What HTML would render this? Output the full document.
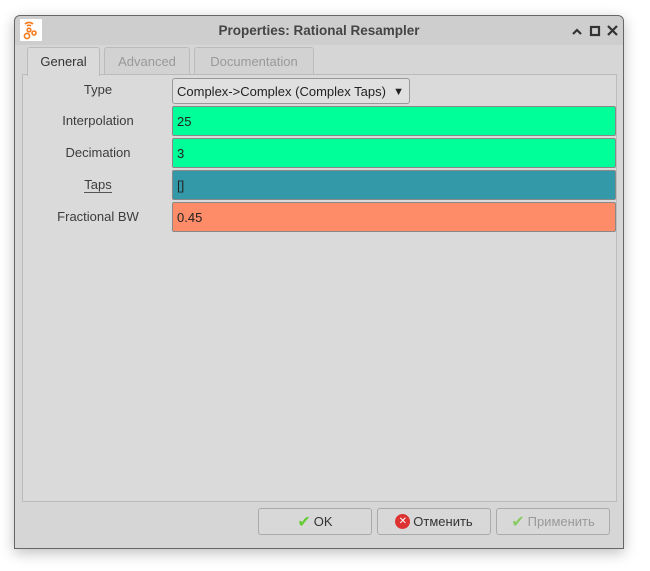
<!DOCTYPE html>
<html><head><style>
body{margin:0;width:650px;height:571px;background:#fff;font-family:"Liberation Sans","DejaVu Sans",sans-serif;font-size:13px;color:#333;position:relative;overflow:hidden}
.win{position:absolute;left:14px;top:15px;width:608px;height:532px;background:#d6d6d6;border:1px solid #666;border-radius:6px 6px 0 0;box-shadow:0 4px 14px rgba(0,0,0,.25)}
.title{position:absolute;left:0;top:0;width:608px;height:29px;background:#cecece;border-radius:6px 6px 0 0}
.title .t{position:absolute;left:0;right:0;top:7px;text-align:center;font-weight:bold;color:#444;font-size:13.5px}
.tab{position:absolute;top:31px;height:27px;border:1px solid #bbb;border-bottom:none;border-radius:3px 3px 0 0;text-align:center;line-height:28px;color:#999;background:#d2d2d2}
.panel{position:absolute;left:7px;top:58px;width:593px;height:426px;background:#dadada;border:1px solid #bbb}
.lbl{position:absolute;left:0;width:150px;text-align:center;color:#3c3c3c}
.fld{position:absolute;left:149px;width:444px;height:27px;border:1px solid #888;border-radius:2px;line-height:27px;padding-left:4px;box-sizing:border-box;color:#222}
.btn{position:absolute;top:492px;height:27px;width:114px;border:1px solid #aaa;border-radius:3px;background:#d8d8d8;color:#333;box-sizing:border-box;display:flex;align-items:center;justify-content:center;gap:3px}
</style></head><body>
<div class="win">
<div class="title">
<svg style="position:absolute;left:5px;top:3px" width="22" height="22"><rect width="22" height="22" fill="#fff"/><g fill="none" stroke="#f57c20" stroke-width="1.6"><path d="M5 5 a6 6 0 0 1 8 0M7 7a3 3 0 0 1 4 0"/><circle cx="9" cy="11" r="1.8"/><circle cx="7" cy="17" r="2.6"/><circle cx="14" cy="14" r="2"/></g></svg>
<div class="t">Properties: Rational Resampler</div>
<svg style="position:absolute;left:556px;top:9px" width="50" height="12" fill="none" stroke="#333" stroke-width="2.2"><path d="M2 9l4-4 4 4"/><rect x="20" y="2" width="8" height="8"/><path d="M37 1l9 9M46 1l-9 9"/></svg>
</div>
<div class="tab" style="left:12px;width:71px;background:#dadada;color:#333;height:28px;z-index:2">General</div>
<div class="tab" style="left:89px;width:84px">Advanced</div>
<div class="tab" style="left:179px;width:118px">Documentation</div>
<div class="panel">
<div class="lbl" style="top:7px">Type</div>
<div class="fld" style="top:3px;width:238px;height:26px;line-height:26px;background:#e0e0e0;border-color:#999;border-radius:3px">Complex-&gt;Complex (Complex Taps)<span style="position:absolute;right:5px;top:0;font-size:11px">▼</span></div>
<div class="lbl" style="top:38px">Interpolation</div>
<div class="fld" style="top:31px;height:30px;line-height:30px;background:#00ff99">25</div>
<div class="lbl" style="top:70px">Decimation</div>
<div class="fld" style="top:63px;height:30px;line-height:30px;background:#00ff99">3</div>
<div class="lbl" style="top:102px"><span style="border-bottom:1px solid #555">Taps</span></div>
<div class="fld" style="top:95px;height:30px;line-height:30px;background:#3399a9">[]</div>
<div class="lbl" style="top:134px">Fractional BW</div>
<div class="fld" style="top:127px;height:30px;line-height:30px;background:#ff8c69">0.45</div>
</div>
<div class="btn" style="left:243px"><span style="color:#6c3;font-weight:bold;font-size:16px">✔</span>OK</div>
<div class="btn" style="left:362px"><span style="display:inline-block;width:15px;height:15px;border-radius:50%;background:#d33;color:#fff;font-size:10px;line-height:15px;text-align:center">✕</span>Отменить</div>
<div class="btn" style="left:481px;color:#999"><span style="color:#8c6;font-weight:bold;font-size:16px">✔</span>Применить</div>
</div>
</body></html>
